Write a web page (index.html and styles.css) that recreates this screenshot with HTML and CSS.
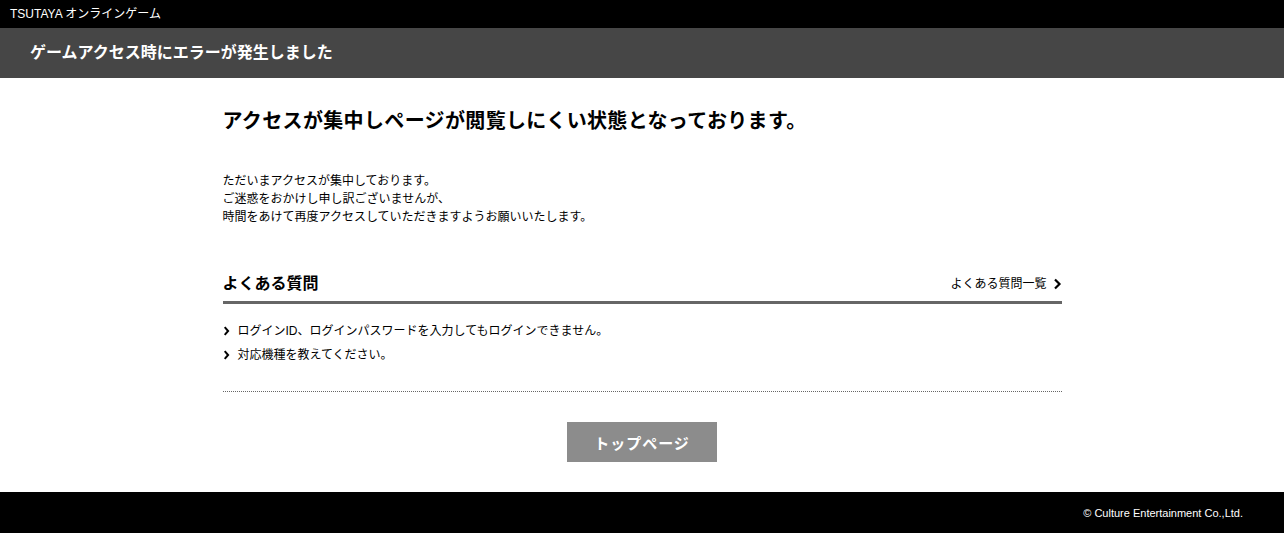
FILE: index.html
```html
<!DOCTYPE html>
<html lang="ja">
<head>
  <meta charset="UTF-8" />
  <title>ゲームアクセス時にエラーが発生しました | TSUTAYA オンラインゲーム</title>
  <link rel="stylesheet" href="styles.css">
</head>
<body>
  <!-- サイト名 -->
  <div class="site-bar">TSUTAYA オンラインゲーム</div>

  <!-- ページタイトル -->
  <div class="page-head">
    <h1>ゲームアクセス時にエラーが発生しました</h1>
  </div>

  <div class="content">
    <h2 class="lead">アクセスが集中しページが閲覧しにくい状態となっております。</h2>
    <p class="message">
      ただいまアクセスが集中しております。<br>
      ご迷惑をおかけし申し訳ございませんが、<br>
      時間をあけて再度アクセスしていただきますようお願いいたします。
    </p>

    <!-- よくある質問 -->
    <div class="faq">
      <div class="faq-head">
        <h3>よくある質問</h3>
        <a class="faq-more" href="#">よくある質問一覧
          <svg class="chev-lg" viewBox="0 0 8 12"><polyline points="1.5,1.5 6,6 1.5,10.5"/></svg>
        </a>
      </div>
      <ul class="faq-list">
        <li><a href="#"><svg class="chev" viewBox="0 0 6 10"><polyline points="1.2,1.2 4.6,5 1.2,8.8"/></svg>ログインID、ログインパスワードを入力してもログインできません。</a></li>
        <li><a href="#"><svg class="chev" viewBox="0 0 6 10"><polyline points="1.2,1.2 4.6,5 1.2,8.8"/></svg>対応機種を教えてください。</a></li>
      </ul>
    </div>

    <div class="actions">
      <a class="btn-top" href="#">トップページ</a>
    </div>
  </div>

  <div class="footer">© Culture Entertainment Co.,Ltd.</div>
</body>
</html>
```

FILE: styles.css
```css
* { box-sizing: border-box; }
body {
  margin: 0;
  font-family: "Liberation Sans", Arial, "Noto Sans CJK JP", sans-serif;
  color: #000;
  background: #fff;
}
a { color: inherit; text-decoration: none; }

/* ===== Header ===== */
.site-bar {
  height: 28px;
  line-height: 28px;
  background: #000;
  color: #fff;
  font-size: 12px;
  padding: 0 10px;
}
.page-head {
  height: 50px;
  background: #464646;
  display: flex;
  align-items: center;
  padding: 0 30px;
}
.page-head h1 {
  margin: 0;
  color: #fff;
  font-size: 16px;
  font-weight: bold;
  line-height: 24px;
}

/* ===== Content ===== */
.content { width: 839px; margin: 0 auto; padding-top: 29px; }
.lead { margin: 0; font-size: 20px; line-height: 28px; font-weight: bold; letter-spacing: 0.35px; }
.message { margin: 37px 0 0; font-size: 12px; line-height: 18px; }

/* ===== FAQ ===== */
.faq { margin-top: 46px; border-bottom: 1px dotted #666; padding-bottom: 24px; }
.faq-head {
  display: flex;
  justify-content: space-between;
  align-items: center;
  padding-bottom: 5px;
  border-bottom: 3px solid #666;
}
.faq-head h3 { margin: 0; font-size: 16px; line-height: 24px; font-weight: bold; }
.faq-more { display: flex; align-items: center; gap: 6px; font-size: 12px; line-height: 24px; }
.chev-lg { width: 9px; height: 12px; fill: none; stroke: #000; stroke-width: 2.2; }
.faq-list { list-style: none; margin: 15px 0 0; padding: 0; }
.faq-list li { font-size: 12px; line-height: 24px; }
.faq-list a { display: flex; align-items: center; gap: 8px; }
.chev { width: 7px; height: 10px; fill: none; stroke: #000; stroke-width: 2; }

/* ===== Button ===== */
.actions { display: flex; justify-content: center; padding: 30px 0; }
.btn-top {
  width: 150px;
  height: 40px;
  display: flex;
  align-items: center;
  justify-content: center;
  background: #8c8c8c;
  color: #fff;
  font-size: 15px;
  font-weight: bold;
  letter-spacing: 1px;
}

/* ===== Footer ===== */
.footer {
  height: 41px;
  background: #000;
  color: #fff;
  font-size: 11px;
  display: flex;
  align-items: center;
  justify-content: flex-end;
  padding-right: 41px;
}
```
